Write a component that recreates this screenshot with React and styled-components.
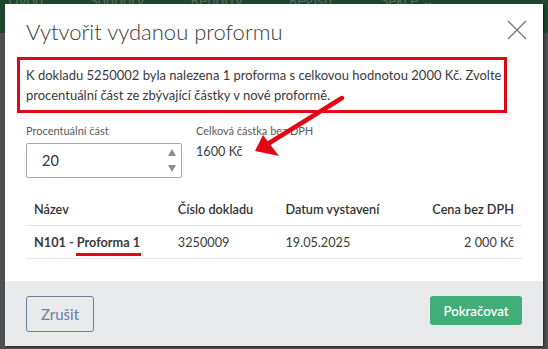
import styled, { createGlobalStyle } from "styled-components";

const GlobalStyle = createGlobalStyle`
  body {
    margin: 0;
    background: #4f4f4f;
    font-family: Lato, "Open Sans", sans-serif;
  }
`;

const Page = styled.div`
  position: relative;
  width: 548px;
  height: 349px;
  overflow: hidden;
  background: #4f4f4f;
`;
const NavBar = styled.div`
  display: flex;
  gap: 46px;
  height: 33px;
  padding-left: 8px;
  background: #1e4630;
  color: #4f6d5c;
  font-size: 15px;
  line-height: 12px;
  & span {
    margin-top: -6px;
  }
`;
const Modal = styled.div`
  position: absolute;
  left: 5px;
  top: 4px;
  width: 538px;
  height: 342px;
  display: flex;
  flex-direction: column;
  background: #fff;
  box-shadow: 1px 1px 2px rgba(0, 0, 0, 0.6);
`;
const Header = styled.div`
  display: flex;
  justify-content: space-between;
  align-items: flex-start;
  padding: 14px 15px 0 21px;
`;
const Title = styled.h2`
  margin: 0;
  font-size: 22px;
  font-weight: 300;
  color: #3b3b3b;
  line-height: 28px;
`;
const Close = styled.button`
  border: 0;
  background: none;
  padding: 0;
  margin-top: 1px;
  width: 22px;
  height: 22px;
  cursor: pointer;
`;
const Body = styled.div`
  flex: 1;
  padding: 11px 21px 0 12px;
  color: #333;
`;
const Notice = styled.div`
  border: 3px solid #e30613;
  padding: 5px 0 5px 6px;
  margin-right: 15px;
  font-size: 13px;
  line-height: 20px;
  color: #3a3a3a;
`;
const FieldRow = styled.div`
  display: flex;
  gap: 14px;
  margin: 11px 0 0 9px;
`;
const Field = styled.div`
  display: flex;
  flex-direction: column;
`;
const Label = styled.label`
  font-size: 11px;
  color: #5a5a5a;
  line-height: 14px;
`;
const InputBox = styled.div`
  display: flex;
  width: 154px;
  height: 33px;
  margin-top: 5px;
  border: 1px solid #a9a9a9;
  border-radius: 2px;
`;
const Input = styled.input`
  flex: 1;
  min-width: 0;
  border: 0;
  outline: none;
  padding: 0 0 0 15px;
  font-family: inherit;
  font-size: 14.5px;
  color: #333;
  background: transparent;
`;
const Spinner = styled.div`
  display: flex;
  flex-direction: column;
  justify-content: space-between;
  align-items: center;
  width: 12px;
  margin: 5px 3px 5px 0;
`;
const Arrow = styled.span`
  width: 0;
  height: 0;
  border-left: 4.5px solid transparent;
  border-right: 4.5px solid transparent;
  ${({ $up }) =>
    $up ? "border-bottom: 7px solid #8d8d8d;" : "border-top: 7px solid #8d8d8d;"}
`;
const Value = styled.div`
  margin-top: 5px;
  font-size: 12.7px;
  line-height: 17px;
  color: #3d3d3d;
`;
const Table = styled.table`
  width: calc(100% - 9px);
  margin: 15px 0 0 9px;
  border-collapse: collapse;
  font-size: 12.7px;
`;
const Th = styled.th`
  padding: 0 8px;
  height: 32px;
  text-align: ${({ $right }) => ($right ? "right" : "left")};
  font-weight: 600;
  color: #333;
  border-bottom: 1px solid #e3e3e3;
`;
const Td = styled.td`
  padding: 0 8px;
  height: 32px;
  text-align: ${({ $right }) => ($right ? "right" : "left")};
  font-weight: ${({ $bold }) => ($bold ? 700 : 400)};
  color: #3a3a3a;
  border-bottom: 1px solid #e3e3e3;
`;
const Marked = styled.span`
  position: relative;
  &::after {
    content: "";
    position: absolute;
    left: -1px;
    right: -1px;
    bottom: -6px;
    height: 3px;
    background: #e30613;
  }
`;
const Footer = styled.div`
  display: flex;
  justify-content: space-between;
  align-items: flex-start;
  height: 65px;
  padding: 15px 21px 0 21px;
  box-sizing: border-box;
  background: #e9eaec;
`;
const CancelButton = styled.button`
  width: 68px;
  height: 36px;
  border: 1px solid #6c7d9b;
  border-radius: 3px;
  background: transparent;
  font-family: inherit;
  font-size: 15px;
  color: #6c7d9b;
`;
const PrimaryButton = styled.button`
  width: 92px;
  height: 29px;
  border: 0;
  border-radius: 3px;
  background: #41ad79;
  font-family: inherit;
  font-size: 13.2px;
  font-weight: 600;
  color: #fff;
`;
const Annotation = styled.svg`
  position: absolute;
  left: 0;
  top: 0;
  pointer-events: none;
`;

export default function App() {
  return (
    <Page>
      <GlobalStyle />
      <NavBar>
        <span>Úvod</span>
        <span>Soubory</span>
        <span>Reporty</span>
        <span>Registr</span>
        <span>Sekce ⌄</span>
      </NavBar>
      <Modal>
        <Header>
          <Title>Vytvořit vydanou proformu</Title>
          <Close aria-label="Zavřít">
            <svg width="22" height="22" viewBox="0 0 22 22">
              <path d="M2 2 L20 20 M20 2 L2 20" stroke="#7a7a7a" strokeWidth="1.3" fill="none" />
            </svg>
          </Close>
        </Header>
        <Body>
          <Notice>
            K dokladu 5250002 byla nalezena 1 proforma s celkovou hodnotou 2000 Kč. Zvolte
            procentuální část ze zbývající částky v nové proformě.
          </Notice>
          <FieldRow>
            <Field>
              <Label>Procentuální část</Label>
              <InputBox>
                <Input value="20" readOnly />
                <Spinner>
                  <Arrow $up />
                  <Arrow />
                </Spinner>
              </InputBox>
            </Field>
            <Field>
              <Label>Celková částka bez DPH</Label>
              <Value>1600 Kč</Value>
            </Field>
          </FieldRow>
          <Table>
            <thead>
              <tr>
                <Th>Název</Th>
                <Th>Číslo dokladu</Th>
                <Th>Datum vystavení</Th>
                <Th $right>Cena bez DPH</Th>
              </tr>
            </thead>
            <tbody>
              <tr>
                <Td $bold>
                  N101 - <Marked>Proforma 1</Marked>
                </Td>
                <Td>3250009</Td>
                <Td>19.05.2025</Td>
                <Td $right>2 000 Kč</Td>
              </tr>
            </tbody>
          </Table>
        </Body>
        <Footer>
          <CancelButton>Zrušit</CancelButton>
          <PrimaryButton>Pokračovat</PrimaryButton>
        </Footer>
      </Modal>
      <Annotation width="548" height="349">
        <line x1="342" y1="98" x2="266" y2="145" stroke="#e30613" strokeWidth="4.5" strokeLinecap="round" />
        <polygon points="255,151 263,135 279,156" fill="#e30613" />
      </Annotation>
    </Page>
  );
}
